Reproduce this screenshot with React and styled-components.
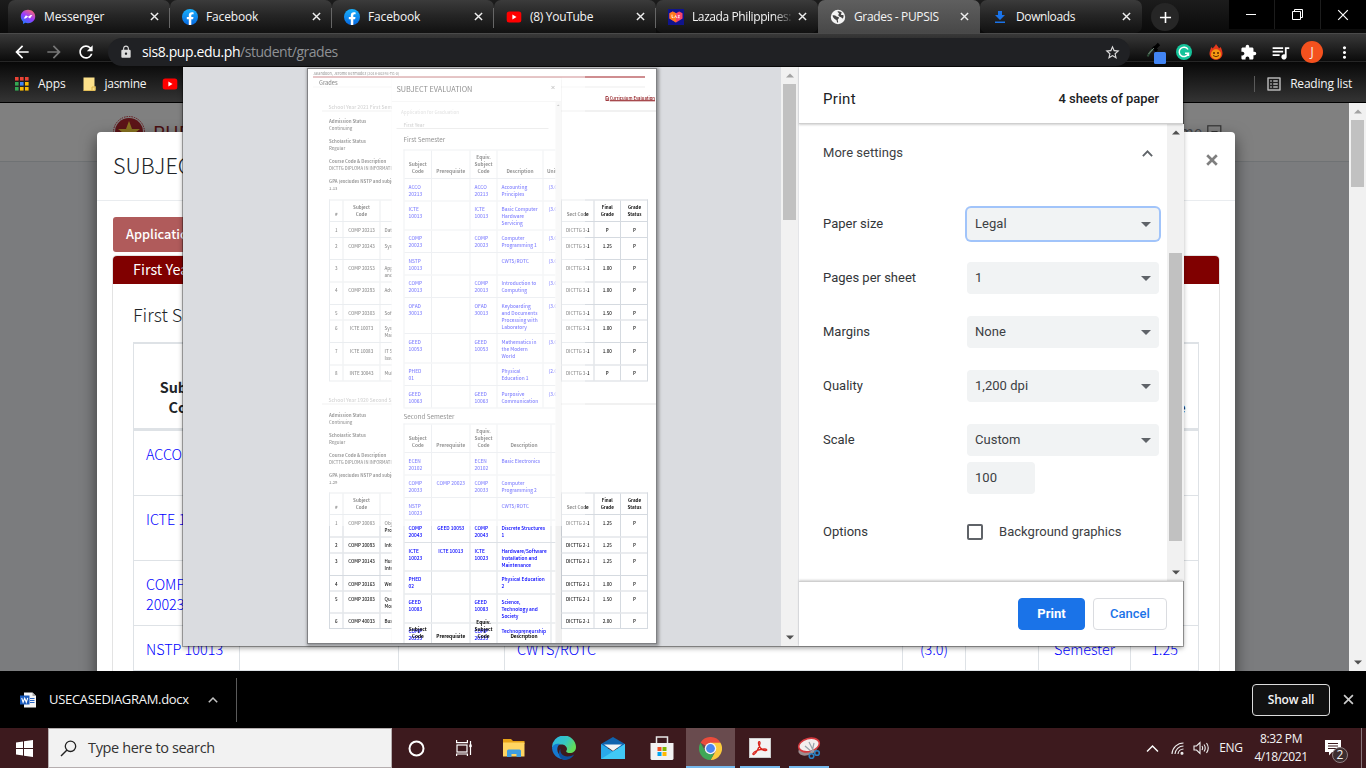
import React from "react";
import styled, { createGlobalStyle, css } from "styled-components";
import {
  MdArrowBack, MdArrowForward, MdRefresh, MdLock, MdStarBorder, MdExtension,
  MdQueueMusic, MdMoreVert, MdListAlt, MdAdd,
} from "react-icons/md";

const ui = `"Open Sans", "Noto Sans", sans-serif`;
const roboto = `Roboto, sans-serif`;
const source = `"Noto Sans CJK SC", "Noto Sans", sans-serif`;

const Global = createGlobalStyle`
  * { box-sizing: border-box; }
  html, body { margin: 0; padding: 0; overflow: hidden; }
  body { font-family: ${ui}; }
  svg { display: block; flex: none; }
`;

const Screen = styled.div`
  position: relative;
  width: 1366px;
  height: 768px;
  display: flex;
  flex-direction: column;
  overflow: hidden;
  background: #000;
`;

const Text = styled.span`
  font-family: ${(p) => p.$font || ui};
  font-size: ${(p) => p.$size || 12}px;
  font-weight: ${(p) => p.$weight || 400};
  letter-spacing: ${(p) => p.$ls || 0}px;
  color: ${(p) => p.$color || "#f4f4f4"};
  line-height: 1.3;
  white-space: nowrap;
`;

/* ---------- tab strip ---------- */
const TabStrip = styled.div`
  height: 33px;
  flex: none;
  display: flex;
  padding-left: 8px;
  background: linear-gradient(#1c1c1c, #0a0a0a);
`;
const TabBox = styled.div`
  width: 162px;
  height: 33px;
  display: flex;
  align-items: center;
  padding: 0 11px 0 12px;
  border-radius: ${(p) => (p.$active ? "7px 7px 0 0" : "7px")};
  background: ${(p) => p.$active ? "linear-gradient(#5f5f5f, #484848)" : "linear-gradient(#3b3b3b, #262626 45%, #111)"};
  ${(p) => p.$sep && css`
    border-radius: 7px 7px 0 0;
    background-image: linear-gradient(#666, #666), linear-gradient(#3b3b3b, #262626 45%, #111);
    background-size: 1px 20px, 100% 100%;
    background-position: right 0 top 8px, 0 0;
    background-repeat: no-repeat;
  `}
`;
const TabTitle = styled(Text)`
  flex: 1;
  margin-left: 8px;
  margin-right: 4px;
  padding-top: 1px;
  overflow: hidden;
  ${(p) => p.$fade && css`mask-image: linear-gradient(90deg, #000 80%, transparent);`}
`;
const NewTab = styled.div`
  width: 28px;
  height: 28px;
  margin: 3px 0 0 9px;
  border-radius: 14px;
  background: #262626;
  display: flex;
  align-items: center;
  justify-content: center;
`;
const WinControls = styled.div`
  display: flex;
  gap: 1px;
  margin-left: auto;
  height: 29px;
  background: #1c1c1c;
`;
const WinButton = styled.div`
  width: 45px;
  display: flex;
  align-items: center;
  justify-content: center;
  padding-right: 1px;
  background: #000;
`;

const X = ({ size = 9, color = "#eee", w = 1.6 }) => (
  <svg width={size} height={size} viewBox="0 0 10 10">
    <path d="M1 1L9 9M9 1L1 9" stroke={color} strokeWidth={w} fill="none" />
  </svg>
);

const Messenger = () => (
  <svg width="16" height="16" viewBox="0 0 16 16">
    <defs><linearGradient id="msg" x1="0.2" y1="1" x2="0.8" y2="0">
      <stop offset="0" stopColor="#1a7bff" /><stop offset=".5" stopColor="#9a3bff" /><stop offset="1" stopColor="#ff6a6a" />
    </linearGradient></defs>
    <path d="M8 .8C3.900.8.8 3.700.8 7.500c0 2 .8 3.700 2.200 4.900v2.600l2.300-1.200c.8.2 1.700.4 2.700.4 4.100 0 7.200-2.900 7.200-6.700S12.100.8 8 .8z" fill="url(#msg)" />
    <path d="M3.700 9.500l2.200-3.300 2.300 1.600 2.500-1.700h1.600L10 9.500 7.800 7.900 5.400 9.500z" fill="#fff" />
  </svg>
);
const Facebook = () => (
  <svg width="16" height="16" viewBox="0 0 16 16">
    <defs><linearGradient id="fb" x1="0" y1="0" x2="0" y2="1"><stop offset="0" stopColor="#1ab0fb" /><stop offset="1" stopColor="#0668e1" /></linearGradient></defs>
    <circle cx="8" cy="8" r="8" fill="url(#fb)" />
    <path d="M11.100 10.300l.4-2.300H9.300V6.500c0-.6.3-1.200 1.300-1.200h1V3.400S10.700 3.200 9.800 3.200C8 3.200 6.800 4.300 6.800 6.300V8h-2v2.300h2v5.600h2.500v-5.600z" fill="#fff" />
  </svg>
);
const YouTube = () => (
  <svg width="16" height="16" viewBox="0 0 16 16">
    <rect x=".7" y="2.600" width="14.600" height="11" rx="2.500" fill="#f00" />
    <path d="M6.400 5.600L10.500 8 6.400 10.400z" fill="#fff" />
  </svg>
);
const Lazada = () => (
  <svg width="16" height="16" viewBox="0 0 16 16">
    <rect width="16" height="16" fill="#10148c" />
    <path d="M8 13.500L1.500 9.500V4.200L4.800 2.500 8 4.300l3.200-1.800 3.300 1.700v5.300z" fill="#f8466a" />
    <path d="M8 13.500L1.500 9.500V4.200L4.800 2.500 8 4.300z" fill="#ff7a1a" />
    <path d="M4 5.600v3h1.500M6.600 8.800l1-2.200 1 2.200M9.800 6.600h1.700L9.900 8.700h1.800" stroke="#fff" strokeWidth=".8" fill="none" />
  </svg>
);
const DownloadIcon = () => (
  <svg width="16" height="16" viewBox="0 0 16 16">
    <path d="M6 2h4v4h3L8 11 3 6h3zM3 12.500h10V14H3z" fill="#1a73e8" />
  </svg>
);
const Globe = () => (
  <svg width="16" height="16" viewBox="0 0 16 16">
    <circle cx="8" cy="8" r="7.200" fill="#f4f4f4" />
    <path d="M2.500 6.500C4 6 5.500 6.500 6.500 7.500 7.500 8 9 7.800 9 8.800c0 1-1.200 1.200-1.200 2.200 0 1 .6 1.500.2 2.800-1-.3-1.300-1.600-1.500-2.800C5 10.500 3 9 2.500 6.500zM7.500 2.500c1.500-.6 3.500.2 4.500 1.500-.8.4-1.300.9-.9 1.800.6.5 1.600 0 2.400.4.2 1.300-.1 2.500-.7 3.300-1-.1-1.300-1.200-2.300-1.500-1-.4-2-.8-2.200-1.700-.1-.8.9-1.200.6-2C8.700 3.600 7.500 3.400 7.500 2.500z" fill="#444" />
  </svg>
);

const TABS = [
  { t: "Messenger", i: <Messenger />, sep: true, ls: -0.1 },
  { t: "Facebook", i: <Facebook />, sep: true, ls: -0.15 },
  { t: "Facebook", i: <Facebook />, sep: true, ls: -0.15 },
  { t: "(8) YouTube", i: <YouTube />, sep: true, ls: -0.3 },
  { t: "Lazada Philippines: O", i: <Lazada />, fade: true, ls: -0.4 },
  { t: "Grades - PUPSIS", i: <Globe />, active: true, ls: -0.35 },
  { t: "Downloads", i: <DownloadIcon />, ls: -0.4 },
];

/* ---------- toolbar ---------- */
const Chrome = styled.div`
  height: 70px;
  flex: none;
  background:
    linear-gradient(#4a4a4a, #4a4a4a) 0 0 / 100% 1px no-repeat,
    linear-gradient(#3a3a3a, #0b0b0b) 0 0 / 100% 28px no-repeat,
    linear-gradient(#262626, #262626) 0 28px / 100% 1px no-repeat,
    linear-gradient(#000, #000) 0 69px / 100% 1px no-repeat,
    linear-gradient(#080808, #343434) 0 29px / 100% 40px no-repeat;
`;
const Toolbar = styled.div`
  height: 35px;
  display: flex;
  align-items: center;
  padding: 3px 0 0 12px;
`;
const NavIcons = styled.div`
  width: 96px;
  display: flex;
  gap: 12px;
`;
const Omnibox = styled.div`
  width: 1022px;
  height: 28px;
  border-radius: 14px;
  background: #202124;
  display: flex;
  align-items: center;
  padding: 0 9px 0 11px;
  svg:last-child { margin-left: auto; }
`;
const Extensions = styled.div`
  flex: 1;
  display: flex;
  align-items: center;
  padding: 0 0 0 16px;
`;
const ExtensionSlot = styled.div`
  width: 32px;
  display: flex;
  justify-content: center;
`;
const EyedropperSlot = styled.div`
  width: 22px;
`;
const Avatar = styled.div`
  width: 22px;
  height: 22px;
  border-radius: 11px;
  background: #f4511e;
  display: flex;
  align-items: center;
  justify-content: center;
`;
const Bookmarks = styled.div`
  height: 35px;
  display: flex;
  align-items: center;
  padding: 0 14px 3px 15px;
`;
const Gap = styled.div`
  width: ${(p) => p.$w}px;
  flex: none;
`;
const Push = styled.div`flex: 1;`;
const Divider = styled.div`
  width: 1px;
  height: ${(p) => p.$h}px;
  background: #5a5a5a;
`;

const Eyedropper = () => (
  <svg width="20" height="23" viewBox="0 0 20 23">
    <path d="M1.500 15.500L4 11l4.500-4.500" stroke="#2d4a36" strokeWidth="2" fill="none" />
    <path d="M7 6l4 4M9.500 6.500L13 3" stroke="#000" strokeWidth="3.200" />
    <path d="M2.500 13L8 7" stroke="#8fa096" strokeWidth=".8" />
    <rect x="8" y="11" width="12" height="12" rx="1.500" fill="#4285f4" />
  </svg>
);
const Grammarly = () => (
  <svg width="16" height="16" viewBox="0 0 16 16">
    <circle cx="8" cy="8" r="8" fill="#15c39a" />
    <path d="M12 5.500A4.700 4.700 0 1 0 12.400 9.300H9M12.500 9v3" stroke="#fff" strokeWidth="1.500" fill="none" />
  </svg>
);
const Flame = () => (
  <svg width="14" height="16" viewBox="0 0 14 16">
    <path d="M7 0c1 2 2.500 2.500 3 4.500L11.500 3c1.200 2 2 4.500 2 6.500 0 3.500-2.800 6.300-6.500 6.300S.5 13 .5 9.500C.5 7.500 1.500 5 2.500 3l1.200 1.500C4.500 3 6.500 2 7 0z" fill="#e5391c" />
    <circle cx="7" cy="10.200" r="5" fill="#f59a12" />
    <circle cx="5" cy="9" r="1" fill="#5a2200" /><circle cx="9" cy="9" r="1" fill="#5a2200" />
    <path d="M4 11.500q3 2.500 6 0" stroke="#5a2200" strokeWidth=".9" fill="none" />
  </svg>
);
const AppsGrid = () => {
  const c = ["#ea4335", "#ea4335", "#ea4335", "#34a853", "#4285f4", "#fbbc05", "#34a853", "#fbbc05", "#fbbc05"];
  return (
    <svg width="14" height="14" viewBox="0 0 14 14">
      {c.map((f, i) => <rect key={i} x={(i % 3) * 5} y={Math.floor(i / 3) * 5} width="3.600" height="3.600" fill={f} />)}
    </svg>
  );
};
const Note = () => (
  <svg width="13" height="14" viewBox="0 0 13 14">
    <path d="M.5.5h11v9h1v4H.5z" fill="#fce18b" /><path d="M9 13.500V10h3.500" stroke="#dcb64c" fill="none" /><path d="M12 9.500v4H.5" stroke="#e2bd57" fill="none" />
  </svg>
);

/* ---------- page behind ---------- */
const Viewport = styled.div`
  position: relative;
  height: 568px;
  flex: none;
  display: flex;
  overflow: hidden;
  background: #7b7c7e;
`;
const PageArea = styled.div`
  flex: 1;
  display: flex;
  flex-direction: column;
`;
const SiteHeader = styled.div`
  height: 59px;
  background: #808080;
  border-bottom: 1px solid #6f7274;
  display: flex;
  align-items: center;
  padding: 0 127px 0 113px;
`;
const ScrollTrack = styled.div`
  width: 17px;
  flex: none;
  display: flex;
  flex-direction: column;
  align-items: center;
  justify-content: space-between;
  padding: 6px 0 6px;
  background: ${(p) => `linear-gradient(#c1c1c1, #c1c1c1) center ${p.$top}px / 13px ${p.$len}px no-repeat, #f1f1f1`};
`;
const Arrow = ({ up, color = "#505050" }) => (
  <svg width="8" height="5" viewBox="0 0 8 5">
    <path d={up ? "M0 4.500L4 .5 8 4.500z" : "M0 .5L4 4.500 8 .5z"} fill={color} />
  </svg>
);
const EvalModal = styled.div`
  position: absolute;
  left: 97px;
  top: 29px;
  width: 1138px;
  height: 620px;
  background: #fff;
  border-radius: 4px;
  box-shadow: 0 6px 16px rgba(0, 0, 0, 0.55);
  color: #212529;
`;
const EvalHead = styled.div`
  height: 69px;
  border-bottom: 1px solid #e9ecef;
  display: flex;
  align-items: center;
  justify-content: space-between;
  padding: 0 17px 2px 16px;
  svg { margin-top: -10px; }
`;
const EvalBody = styled.div`
  padding: 16px 16px 0;
`;
const GraduationButton = styled.div`
  height: 35px;
  width: 200px;
  padding: 0 13px;
  border-radius: 3px;
  background: #b05b5b;
  display: flex;
  align-items: center;
`;
const YearCard = styled.div`
  margin-top: 4px;
  height: 430px;
  box-shadow: 0 0 0 1px #e3e3e3;
  border-radius: 4px 4px 0 0;
`;
const YearHead = styled.div`
  height: 28px;
  padding: 0 20px 2px;
  border-radius: 4px 4px 0 0;
  background: #800000;
  display: flex;
  align-items: center;
`;
const Semester = styled.div`
  height: 58px;
  padding: 19px 20px 0;
`;
const COLS = "106px 159px 106px 398px 63px 73px 92px 68px";
const SubjTable = styled.div`
  margin-left: 20px;
  width: 1066px;
  border-left: 1px solid #dee2e6;
  border-top: 2px solid #dee2e6;
`;
const SubjRow = styled.div`
  display: grid;
  grid-template-columns: ${COLS};
  height: ${(p) => p.$h}px;
  border-bottom: ${(p) => (p.$head ? 3 : 1)}px solid #dee2e6;
`;
const SubjCell = styled.div`
  padding: 13px 12px 0;
  font: 300 14.4px/20px ${source};
  color: #0000ff;
  white-space: pre-line;
  border-right: 1px solid #dee2e6;
  text-align: ${(p) => (p.$c ? "center" : "left")};
  ${(p) => p.$head && css`
    font-weight: 700;
    font-size: 14.4px;
    color: #212529;
    display: flex;
    align-items: flex-end;
    justify-content: center;
    text-align: center;
    padding-bottom: 13px;
  `}
`;
const HEADS = ["Subject Code", "Prerequisite", "Equiv. Subject Code", "Description", "Units", "", "Taken", "Grade"];
const ROWS = [
  [65, ["ACCO 20213", "", "", "Accounting Principles", "(3.0)", "", "", ""]],
  [65, ["ICTE 10013", "", "", "Basic Computer Hardware Servicing", "(3.0)", "", "", ""]],
  [65, ["COMP\n20023", "", "", "Computer Programming 1", "(3.0)", "", "", ""]],
  [45, ["NSTP 10013", "", "", "CWTS/ROTC", "(3.0)", "", "Semester", "1.25"]],
];

const Seal = () => (
  <svg width="32" height="32" viewBox="0 0 32 32">
    <circle cx="16" cy="16" r="15.500" fill="none" stroke="#65181c" strokeDasharray="1.500 1" />
    <circle cx="16" cy="16" r="14" fill="#5c1418" />
    <path d="M16 5l3 8h8l-6.500 5 2.500 8-7-5-7 5 2.500-8L5 13h8z" fill="#8a7420" />
  </svg>
);

/* ---------- print dialog ---------- */
const Dialog = styled.div`
  position: absolute;
  left: 183px;
  top: 67px;
  width: 1000px;
  height: 579px;
  display: flex;
  background: #fff;
  box-shadow: 0 0 0 1px rgba(0, 0, 0, 0.3), 0 2px 5px rgba(0, 0, 0, 0.4);
`;
const Preview = styled.div`
  width: 598px;
  background: #dadce0;
  padding: 2px 0 0 125px;
`;
const Panel = styled.div`
  width: 385px;
  display: flex;
  flex-direction: column;
  border-left: 1px solid #e4e5e8;
`;
const PanelHead = styled.div`
  height: 57px;
  display: flex;
  align-items: center;
  justify-content: space-between;
  padding: 9px 24px 0;
  border-bottom: 1px solid #cfcfcf;
  box-shadow: 0 1px 2px rgba(0, 0, 0, 0.18);
  position: relative;
`;
const PanelMid = styled.div`
  height: 457px;
  display: flex;
`;
const Settings = styled.div`
  flex: 1;
  padding: 0 8px 0 24px;
`;
const More = styled.div`
  height: 59px;
  margin-bottom: 14px;
  padding: 0 6px 0 0;
  display: flex;
  align-items: center;
  justify-content: space-between;
`;
const SettingRow = styled.div`
  height: 54px;
  display: flex;
  align-items: center;
`;
const SettingLabel = styled(Text).attrs({ $font: roboto, $size: 13, $color: "#333639" })`
  width: 144px;
`;
const Select = styled.div`
  width: 192px;
  height: 32px;
  border-radius: 4px;
  background: #f1f3f4;
  display: flex;
  align-items: center;
  justify-content: space-between;
  padding: 0 8px;
  ${(p) => p.$focus && css`box-shadow: 0 0 0 2px #a1c4fa;`}
`;
const ScaleInput = styled(Select)`
  width: 68px;
  margin: -5px 0 0 144px;
`;
const OptionRow = styled(SettingRow)`
  margin-top: 11px;
`;
const Checkbox = styled.div`
  width: 16px;
  height: 16px;
  border: 2px solid #5f6368;
  border-radius: 2px;
  margin-right: 16px;
`;
const PanelFoot = styled.div`
  flex: 1;
  display: flex;
  justify-content: flex-end;
  gap: 8px;
  padding: 16px 16px 0;
  border-top: 1px solid #cfcfcf;
  box-shadow: 0 -1px 2px rgba(0, 0, 0, 0.18);
  position: relative;
`;
const Button = styled.div`
  height: 32px;
  width: ${(p) => p.$w}px;
  border-radius: 4px;
  display: flex;
  align-items: center;
  justify-content: center;
  background: ${(p) => (p.$primary ? "#1a73e8" : "#fff")};
  border: 1px solid ${(p) => (p.$primary ? "#1a73e8" : "#dadce0")};
`;

/* ---------- previewed sheet ---------- */
/* laid out at four times its size and scaled down, so the tiny glyphs keep their true proportions */
const Sheet = styled.div`
  position: relative;
  width: 348px;
  height: 574px;
  zoom: 4;
  transform: scale(0.25);
  transform-origin: 0 0;
  background: #fff;
  overflow: hidden;
`;
const SheetFrame = styled.div`
  width: 348px;
  height: 574px;
  box-shadow: 0 0 0 1px #808184, 1px 1px 3px 2px rgba(0, 0, 0, 0.35);
`;
const Tiny = styled.div`
  height: ${(p) => p.$h || 7}px;
  line-height: ${(p) => p.$h || 7}px;
  font-family: ${source};
  font-size: ${(p) => p.$size || 4.4}px;
  font-weight: ${(p) => p.$weight || 500};
  color: ${(p) => p.$color || "#333"};
  white-space: nowrap;
  padding-left: ${(p) => p.$x || 0}px;
`;
const DocName = styled(Tiny)`
  border-bottom: 1px solid #a01c22;
  margin: 0 11px 0 5px;
`;
const GradesTitle = styled(Tiny)`
  margin: 0 11px 0 5px;
  border-bottom: 1px solid #eee;
`;
const Curriculum = styled.div`
  height: 15px;
  display: flex;
  align-items: center;
  justify-content: flex-end;
  gap: 0.5px;
  padding: 7px 1px 0 0;
`;
const MaroonLink = styled(Tiny)`
  color: #8b0f14;
  border-bottom: 1px solid #8b0f14;
`;
const YearLine = styled(Tiny)`
  margin-left: 14px;
  padding-left: 6.5px;
  border-bottom: 1px solid #e4e4e4;
`;
const Facts = styled.div`
  padding-left: 21px;
  padding-top: ${(p) => p.$top}px;
  height: ${(p) => p.$h}px;
`;
const Fact = styled.div`
  height: 20px;
`;
const GCOLS = "13.5px 37px 181.5px 32.5px 26.5px 27px";
const GradeTable = styled.div`
  margin-left: 21px;
  width: 319px;
  border: solid #d5dae0;
  border-width: 1px 1px 0 1px;
`;
const GradeRow = styled.div`
  display: grid;
  grid-template-columns: ${GCOLS};
  height: ${(p) => p.$h}px;
  border-bottom: 1px solid #d5dae0;
`;
const GradeCell = styled.div`
  font: ${(p) => (p.$b ? 700 : 500)} 4.500px/7px ${source};
  color: ${(p) => (p.$b ? "#111" : "#222")};
  padding: ${(p) => (p.$head ? "0 0 3.500px" : "4px 0 0")};
  padding-left: ${(p) => (p.$left ? 4 : 0)}px;
  text-align: ${(p) => (p.$left ? "left" : "center")};
  border-right: 1px solid #d5dae0;
  white-space: pre;
  display: flex;
  align-items: ${(p) => (p.$head ? "flex-end" : "flex-start")};
  justify-content: ${(p) => (p.$left ? "flex-start" : "center")};
  &:last-child { border-right: 0; }
`;
const SecondTerm = styled.div`
  padding-top: 13.5px;
`;
const PrintModal = styled.div`
  position: absolute;
  left: 83.500px;
  top: 9px;
  width: 169.500px;
  height: 565px;
  background: #fff;
  box-shadow: 0 0 1px 1px rgba(0, 0, 0, 0.07);
  overflow: hidden;
`;
const PmHead = styled.div`
  height: 24px;
  border-bottom: 1px solid #eee;
  display: flex;
  align-items: center;
  justify-content: space-between;
  padding: 0 6px 1px 5px;
  svg { margin-top: -3px; }
`;
const PmBody = styled.div`
  display: flex;
`;
const PmContent = styled.div`
  width: 164px;
  overflow: hidden;
`;
const PmScroll = styled.div`
  width: 5.5px;
  height: 541px;
  background: #f0f0f0;
  display: flex;
  justify-content: center;
  padding-top: 2px;
`;
const PmYear = styled(Tiny)`
  margin: 0 7px 0 5px;
  border-bottom: 1px solid #ddd;
`;
const PmTable = styled.div`
  margin-left: 12px;
  width: 190px;
  border: solid #dde1e6;
  border-width: 1px 0 0 1px;
`;
const PmRow = styled.div`
  display: grid;
  grid-template-columns: 27.500px 38.500px 27px ${(p) => p.$last || 46}px 40px;
  height: ${(p) => p.$h}px;
  border-bottom: 1px solid #dde1e6;
`;
const PmCell = styled.div`
  font: ${(p) => (p.$head ? 700 : 500)} 4.800px/7px ${source};
  color: ${(p) => (p.$head ? "#222" : "#0000ff")};
  white-space: pre;
  border-right: 1px solid #dde1e6;
  display: flex;
  align-items: ${(p) => (p.$head ? "flex-end" : "flex-start")};
  justify-content: ${(p) => (p.$c || p.$head ? "center" : "flex-start")};
  text-align: ${(p) => (p.$c || p.$head ? "center" : "left")};
  padding: ${(p) => (p.$head ? "0 0 3.500px" : "4px 0 0 4px")};
  ${(p) => p.$c && "padding-left: 0;"}
  ${(p) => p.$units && "justify-content: flex-start; padding-left: 3.500px;"}
`;
const RepeatedHead = styled.div`
  position: absolute;
  left: 96px;
  bottom: 0;
  display: grid;
  grid-template-columns: 27.500px 38.500px 27px 54px;
  height: 26px;
`;
const RepeatedCell = styled(PmCell)`
  border: 0;
  color: #000;
`;
const Fade = styled.div`
  position: absolute;
  left: 0;
  top: 0;
  width: 277px;
  height: 457px;
  background: rgba(255, 255, 255, 0.5);
`;

const G1 = [
  [16, "1", "COMP 20213", "Data", "DICTTG 3-1", "P"],
  [22, "2", "COMP 20243", "Syst", "DICTTG 3-1", "1.25"],
  [22.5, "3", "COMP 20253", "Appl\nand", "DICTTG 3-1", "1.00"],
  [22.5, "4", "COMP 20293", "Adva", "DICTTG 3-1", "1.00"],
  [15.5, "5", "COMP 20303", "Soft", "DICTTG 3-1", "1.50"],
  [22.5, "6", "ICTE 10073", "Syst\nMain", "DICTTG 3-1", "1.00"],
  [22.5, "7", "ICTE 10083", "IT So\nIssu", "DICTTG 3-1", "1.00"],
  [16, "8", "INTE 30043", "Mult", "DICTTG 3-1", "P"],
];
const G2 = [
  [22.5, "1", "COMP 20083", "Obje\nProg", "DICTTG 2-1", "1.25"],
  [16, "2", "COMP 20093", "Info", "DICTTG 2-1", "1.25"],
  [22.5, "3", "COMP 20143", "Hum\nInte", "DICTTG 2-1", "1.25"],
  [15.5, "4", "COMP 20163", "Web", "DICTTG 2-1", "1.00"],
  [22, "5", "COMP 20203", "Qua\nMod", "DICTTG 2-1", "1.50"],
  [15.5, "6", "COMP 40033", "Busi", "DICTTG 2-1", "2.00"],
];
const E1 = [
  [22.5, "ACCO\n20213", "", "ACCO\n20213", "Accounting\nPrinciples", "(3.0)"],
  [29, "ICTE\n10013", "", "ICTE\n10013", "Basic Computer\nHardware\nServicing", "(3.0)"],
  [22.5, "COMP\n20023", "", "COMP\n20023", "Computer\nProgramming 1", "(3.0)"],
  [22.5, "NSTP\n10013", "", "", "CWTS/ROTC", "(3.0)"],
  [22.5, "COMP\n20013", "", "COMP\n20013", "Introduction to\nComputing", "(3.0)"],
  [36, "OFAD\n30013", "", "OFAD\n30013", "Keyboarding\nand Documents\nProcessing with\nLaboratory", "(3.0)"],
  [29.5, "GEED\n10053", "", "GEED\n10053", "Mathematics in\nthe Modern\nWorld", "(3.0)"],
  [22.5, "PHED\n01", "", "", "Physical\nEducation 1", "(2.0)"],
  [22.5, "GEED\n10063", "", "GEED\n10063", "Purposive\nCommunication", "(3.0)"],
];
const E2 = [
  [22.5, "ECEN\n20102", "", "ECEN\n20102", "Basic Electronics", ""],
  [22.5, "COMP\n20033", "COMP 20023", "COMP\n20033", "Computer\nProgramming 2", ""],
  [22.5, "NSTP\n10023", "", "", "CWTS/ROTC", ""],
  [22.5, "COMP\n20043", "GEED 10053", "COMP\n20043", "Discrete Structures\n1", ""],
  [28.5, "ICTE\n10023", "ICTE 10013", "ICTE\n10023", "Hardware/Software\nInstallation and\nMaintenance", ""],
  [23, "PHED\n02", "", "", "Physical Education\n2", ""],
  [29, "GEED\n10083", "", "GEED\n10083", "Science,\nTechnology and\nSociety", ""],
  [29, "COMP\n20233", "", "COMP\n20233", "Technopreneurship", ""],
];

const FactList = ({ top, h, gpa }) => (
  <Facts $top={top} $h={h}>
    <Fact><Tiny $weight={700}>Admission Status</Tiny><Tiny>Continuing</Tiny></Fact>
    <Fact><Tiny $weight={700}>Scholastic Status</Tiny><Tiny>Regular</Tiny></Fact>
    <Fact><Tiny $weight={700}>Course Code &amp; Description</Tiny><Tiny $size={4.2}>DICTTG DIPLOMA IN INFORMATION</Tiny></Fact>
    <Fact><Tiny $weight={700}>GPA (excludes NSTP and subjects</Tiny><Tiny $size={4.2}>{gpa}</Tiny></Fact>
  </Facts>
);
const Grades = ({ rows }) => (
  <GradeTable>
    <GradeRow $h={21.5}>
      {["#", "Subject\nCode", "", "Sect Code", "Final\nGrade", "Grade\nStatus"].map((t, i) => <GradeCell key={i} $head $b>{t}</GradeCell>)}
    </GradeRow>
    {rows.map((r) => (
      <GradeRow key={r[1]} $h={r[0]}>
        <GradeCell>{r[1]}</GradeCell><GradeCell>{r[2]}</GradeCell><GradeCell $left>{r[3]}</GradeCell>
        <GradeCell>{r[4]}</GradeCell><GradeCell>{r[5]}</GradeCell><GradeCell>P</GradeCell>
      </GradeRow>
    ))}
  </GradeTable>
);
const EHEAD = ["Subject\nCode", "Prerequisite", "Equiv.\nSubject\nCode", "Description"];
const Evaluation = ({ rows, last, units }) => (
  <PmTable>
    <PmRow $h={28.5} $last={last}>
      {[...EHEAD, units ? "Units" : ""].map((t, i) => <PmCell key={i} $head $c={i < 4} $units={i === 4}>{t}</PmCell>)}
    </PmRow>
    {rows.map((r, k) => (
      <PmRow key={k} $h={r[0]} $last={last}>
        <PmCell>{r[1]}</PmCell><PmCell $c>{r[2]}</PmCell><PmCell>{r[3]}</PmCell><PmCell>{r[4]}</PmCell><PmCell>{" " + r[5]}</PmCell>
      </PmRow>
    ))}
  </PmTable>
);

/* ---------- shelf and taskbar ---------- */
const Shelf = styled.div`
  height: 57px;
  flex: none;
  background: #000;
  display: flex;
  align-items: center;
  padding: 0 12px 0 20px;
`;
const ShowAll = styled.div`
  width: 78px;
  height: 32px;
  border: 1px solid #dcdcdc;
  border-radius: 4px;
  background: #111;
  display: flex;
  align-items: center;
  justify-content: center;
`;
const Taskbar = styled.div`
  height: 40px;
  flex: none;
  background: #3d1a1e;
  display: flex;
`;
const TaskItem = styled.div`
  width: ${(p) => p.$w || 49}px;
  height: 40px;
  display: flex;
  align-items: center;
  justify-content: center;
  ${(p) => p.$open && css`background: linear-gradient(#76b9ed, #76b9ed) center bottom / 40px 2px no-repeat;`}
  ${(p) => p.$active && css`background: linear-gradient(#76b9ed, #76b9ed) center bottom / 100% 2px no-repeat, #694b4e;`}
`;
const SearchBox = styled.div`
  width: 344px;
  height: 40px;
  background: #f2f2f2;
  border: 1px solid #b5aeaf;
  display: flex;
  align-items: center;
  padding: 1px 0 0 11px;
`;
const Clock = styled.div`
  width: 64px;
  display: flex;
  flex-direction: column;
  align-items: center;
  justify-content: center;
  gap: 2px;
`;
const Notice = styled.div`
  position: relative;
  width: 24px;
`;
const Count = styled.div`
  position: absolute;
  left: 7px;
  top: 7px;
  width: 16px;
  height: 16px;
  border: 1px solid #8f8083;
  border-radius: 8px;
  background: #3c2d2f;
  display: flex;
  align-items: center;
  justify-content: center;
`;
const ShowDesktop = styled.div`
  width: 5px;
  margin-left: 12px;
  border-left: 1px solid #87757a;
`;

const Chevron = ({ w = 10, color = "#bbb", sw = 1.5 }) => (
  <svg width={w} height={w} viewBox="0 0 10 10"><path d="M.8 7.300L5 3l4.200 4.300" stroke={color} strokeWidth={sw} fill="none" /></svg>
);
const WordIcon = () => (
  <svg width="17" height="16" viewBox="0 0 17 16">
    <path d="M4 .5h8.500L16 4v11.500H4z" fill="#f5f5f5" /><path d="M12.500.5V4H16z" fill="#a9a9a9" />
    <path d="M10 6.500h4.500M10 8.500h4.500M10 10.500h4.500" stroke="#2b66c4" strokeWidth="1" />
    <rect x="0" y="3.500" width="9.500" height="9" fill="#185abd" />
    <path d="M1.700 5.800l1.400 4.500 1.600-4 1.600 4 1.400-4.500" stroke="#fff" strokeWidth="1.100" fill="none" />
  </svg>
);
const WindowsIcon = () => (
  <svg width="17" height="17" viewBox="0 0 17 17"><path d="M0 2.500l7-1V8H0zM8 1.300L17 0v8H8zM0 9h7v6.600l-7-1zM8 9h9v8l-9-1.300z" fill="#fff" /></svg>
);
const SearchIcon = () => (
  <svg width="17" height="17" viewBox="0 0 17 17"><circle cx="10.500" cy="6.300" r="5.200" fill="none" stroke="#222" strokeWidth="1.300" /><path d="M7 10L1 16" stroke="#222" strokeWidth="1.400" /></svg>
);
const TaskView = () => (
  <svg width="16" height="16" viewBox="0 0 16 16" fill="none" stroke="#fff" strokeWidth="1.200">
    <rect x="1" y="5" width="10" height="7" /><path d="M.600 0v2.600h10.800V0M.600 16v-2h10.800v2M14.500 1v14" /><rect x="13.300" y="4.500" width="2.400" height="2.600" fill="#fff" stroke="none" />
  </svg>
);
const Folder = () => (
  <svg width="22" height="18" viewBox="0 0 22 18">
    <path d="M0 0h8l2 2h11.500v3H0z" fill="#e8a317" /><path d="M0 3.500h21.500V17.500H0z" fill="#ffd562" />
    <path d="M4 18v-6a1.500 1.500 0 0 1 1.500-1.500h11A1.500 1.500 0 0 1 18 12v6h-4.500v-3h-5v3z" fill="#3f9ee0" />
  </svg>
);
const Edge = () => (
  <svg width="24" height="24" viewBox="0 0 24 24">
    <defs><linearGradient id="eg" x1="0" y1="0" x2="1" y2=".5"><stop offset="0" stopColor="#2ab4e8" /><stop offset=".6" stopColor="#36c7c0" /><stop offset="1" stopColor="#62dd58" /></linearGradient></defs>
    <path d="M0 12a12 12 0 0 1 24-1c0 4-3 6-6 6-3 0-4.500-1.300-3.500-2.600C16 12.500 14 9 10.500 8.500 5 8 0 11 0 12z" fill="url(#eg)" />
    <path d="M0 12C.5 9 4 7 8 8c-3 2-3.500 6-1.500 9.500 2 3.700 6 5.300 10 5A12 12 0 0 1 0 12z" fill="#1579cf" />
    <path d="M8.500 12.500c-1 4 2 8 7 8 2.500 0 5-.8 6.500-2-2 4-6 5.500-10 5.500-5-1.500-6.500-7-3.500-11.500z" fill="#0d4f9e" />
  </svg>
);
const Mail = () => (
  <svg width="24" height="22" viewBox="0 0 24 22">
    <path d="M0 7L12 0l12 7v4H0z" fill="#0f63ae" />
    <path d="M0 7l12 7.500L24 7v15H0z" fill="#29a9ea" /><path d="M0 22L24 7v15z" fill="#41c8f5" /><path d="M3 7.500h18L12 14z" fill="#f2f4f6" />
  </svg>
);
const Store = () => (
  <svg width="24" height="24" viewBox="0 0 24 24">
    <path d="M6.500 8V1h11v7" fill="none" stroke="#e6e6e6" strokeWidth="1.500" /><path d="M.5 7h23v16l-1 1h-21l-1-1z" fill="#f2f2f2" />
    <rect x="7.500" y="11" width="4" height="4" fill="#f25022" /><rect x="12.500" y="11" width="4" height="4" fill="#7fba00" />
    <rect x="7.500" y="16" width="4" height="4" fill="#00a4ef" /><rect x="12.500" y="16" width="4" height="4" fill="#ffb900" />
  </svg>
);
const ChromeLogo = () => (
  <svg width="23" height="23" viewBox="0 0 24 24">
    <path d="M12 12L1.600 6A12 12 0 0 1 22.400 6z" fill="#ea4c3c" /><path d="M12 6h10.400A12 12 0 0 1 12 24l5.200-9z" fill="#fbcb3c" />
    <path d="M1.600 6L6.800 15 12 17.500h3.700L12 24A12 12 0 0 1 1.600 6z" fill="#3fa757" /><circle cx="12" cy="12" r="6" fill="#f3f3f3" /><circle cx="12" cy="12" r="4.600" fill="#4b86f0" />
  </svg>
);
const Acrobat = () => (
  <svg width="22" height="20" viewBox="0 0 22 20">
    <rect x=".5" y=".5" width="21" height="19" fill="#f3f3f3" stroke="#ccc" />
    <path d="M4 15.500c1-2 6-4.500 11.500-4.500 2.500 0 3 1.500 1 1.700C13 13 9 7.500 9.500 4.500c.2-1.500 1.800-1 1.500.8C10.500 9 7 15.500 5 16.500c-.8.4-1.300-.3-1-1z" fill="none" stroke="#d9251c" strokeWidth="1.300" />
  </svg>
);
const Snip = () => (
  <svg width="24" height="23" viewBox="0 0 24 23">
    <ellipse cx="11" cy="12" rx="10" ry="6" fill="#9c8d90" transform="rotate(-22 11 12)" />
    <ellipse cx="12" cy="8" rx="10.500" ry="6.500" fill="#f3eeee" stroke="#d63a3f" strokeWidth="1.600" transform="rotate(-15 12 8)" />
    <path d="M12 5l5 10M17 6l-2 9M8 9l7 6" stroke="#99a2aa" strokeWidth="1.200" />
    <circle cx="14.500" cy="19" r="2.300" fill="none" stroke="#2b82c3" strokeWidth="1.600" /><circle cx="20" cy="16" r="2.300" fill="none" stroke="#2b82c3" strokeWidth="1.600" />
  </svg>
);
const Wifi = () => (
  <svg width="13" height="13" viewBox="0 0 13 13" fill="none" stroke="#eee" strokeWidth="1.100">
    <path d="M1 12A11.500 11.500 0 0 1 12.500 1M4 12a8.500 8.500 0 0 1 8.500-8M7 12a5.500 5.500 0 0 1 5.500-5" /><circle cx="11" cy="11.300" r="1" fill="#eee" />
  </svg>
);
const Sound = () => (
  <svg width="17" height="14" viewBox="0 0 17 14" fill="none" stroke="#eee" strokeWidth="1.100">
    <path d="M1 5h2.500L7 1.500v11L3.500 9H1zM9 5q1.300 2 0 4M11 3.500q2.500 3.500 0 7M13.500 2q3.500 5 0 10" />
  </svg>
);
const Bubble = () => (
  <svg width="16" height="16" viewBox="0 0 16 16"><path d="M0 0h16v12H7l-3 3.500V12H0z" fill="#fff" /><path d="M3 3.500h10M3 6h10M3 8.500h10" stroke="#3d1a1e" /></svg>
);

const SELECTS = [["Paper size", "Legal"], ["Pages per sheet", "1"], ["Margins", "None"], ["Quality", "1,200 dpi"], ["Scale", "Custom"]];
const DropArrow = () => <svg width="10" height="5" viewBox="0 0 10 5"><path d="M0 0h10L5 5z" fill="#5f6368" /></svg>;
const Val = (p) => <Text $font={roboto} $size={13} $color="#3c4043" $ls={0.03} {...p} />;

function PrintDialog() {
  return (
    <Dialog>
      <Preview>
        <SheetFrame>
          <Sheet>
            <DocName $h={8.5} $size={3.7} $color="#444">Jalandoon, Jerome Bermudez (2018-00293-TG-0)</DocName>
            <GradesTitle $h={10} $size={5.6} $x={6} $color="#111">Grades</GradesTitle>
            <Curriculum>
              <svg width="4" height="5" viewBox="0 0 4 5"><path d="M.5.5h2l1 1v3h-3zM1 3h2" fill="none" stroke="#8b0f14" strokeWidth=".8" /></svg>
              <MaroonLink $h={5.5} $size={4.25}>Curriculum Evaluation</MaroonLink>
            </Curriculum>
            <YearLine $h={9} $size={5} $color="#aaa">School Year 2021 First Semester</YearLine>
            <FactList top={6.5} h={88} gpa="1.13" />
            <Grades rows={G1} />
            <SecondTerm>
              <YearLine $h={9.5} $size={5} $color="#aaa">School Year 1920 Second Semester</YearLine>
              <FactList top={7} h={88} gpa="1.29" />
              <Grades rows={G2} />
            </SecondTerm>
            <PrintModal>
              <PmHead><Tiny $h={12} $size={7.3} $weight={400} $color="#111">SUBJECT EVALUATION</Tiny><X size={4} color="#777" w={2} /></PmHead>
              <PmBody>
                <PmContent>
                  <Tiny $h={19} $size={4.6} $x={9.5} $color="#ccc">Application for Graduation</Tiny>
                  <PmYear $h={8} $size={4.8} $x={7} $color="#aaa">First Year</PmYear>
                  <Tiny $h={20.5} $size={6.3} $x={12} $weight={400} $color="#222">First Semester</Tiny>
                  <Evaluation rows={E1} units />
                  <Tiny $h={15} $size={6.3} $x={12} $weight={400} $color="#222">Second Semester</Tiny>
                  <Evaluation rows={E2} last={54} />
                </PmContent>
                <PmScroll><svg width="3" height="2" viewBox="0 0 3 2"><path d="M0 2L1.500.5 3 2z" fill="#999" /></svg></PmScroll>
              </PmBody>
            </PrintModal>
            <RepeatedHead>{EHEAD.map((t) => <RepeatedCell key={t} $head $c>{t}</RepeatedCell>)}</RepeatedHead>
            <Fade />
          </Sheet>
        </SheetFrame>
      </Preview>
      <ScrollTrack $top={17} $len={136}><Arrow up color="#a3a3a3" /><Arrow /></ScrollTrack>
      <Panel>
        <PanelHead>
          <Text $font={roboto} $size={15} $color="#202124" $ls={0.3}>Print</Text>
          <Text $font={roboto} $size={13} $color="#202124" $weight={500} $ls={-0.03}>4 sheets of paper</Text>
        </PanelHead>
        <PanelMid>
          <Settings>
            <More><Val>More settings</Val><Chevron w={11} color="#5f6368" sw={1.7} /></More>
            {SELECTS.map(([l, v], i) => (
              <SettingRow key={l}>
                <SettingLabel>{l}</SettingLabel>
                <Select $focus={i === 0}><Val>{v}</Val><DropArrow /></Select>
              </SettingRow>
            ))}
            <ScaleInput><Val>100</Val></ScaleInput>
            <OptionRow><SettingLabel>Options</SettingLabel><Checkbox /><Val>Background graphics</Val></OptionRow>
          </Settings>
          <ScrollTrack $top={129} $len={288}><Arrow up /><Arrow /></ScrollTrack>
        </PanelMid>
        <PanelFoot>
          <Button $primary $w={67}><Text $font={roboto} $size={13} $weight={700} $color="#fff">Print</Text></Button>
          <Button $w={74}><Text $font={roboto} $size={13} $weight={500} $color="#1a73e8">Cancel</Text></Button>
        </PanelFoot>
      </Panel>
    </Dialog>
  );
}

export default function App() {
  return (
    <Screen>
      <Global />
      <TabStrip>
        {TABS.map((t, i) => (
          <TabBox key={i} $active={t.active} $sep={t.sep}>
            {t.i}
            <TabTitle $fade={t.fade} $ls={t.ls}>{t.t}</TabTitle>
            <X />
          </TabBox>
        ))}
        <NewTab><MdAdd size={19} color="#fff" /></NewTab>
        <WinControls>
          <WinButton><svg width="10" height="2"><rect width="10" height="1" fill="#fff" /></svg></WinButton>
          <WinButton><svg width="11" height="11" viewBox="0 0 11 11" fill="none" stroke="#fff"><path d="M.5 2.500h8v8h-8zM2.500 2.500v-2h8v8h-2" /></svg></WinButton>
          <WinButton><X size={12} w={1} color="#fff" /></WinButton>
        </WinControls>
      </TabStrip>
      <Chrome>
        <Toolbar>
          <NavIcons><MdArrowBack size={20} color="#fff" /><MdArrowForward size={20} color="#777" /><MdRefresh size={20} color="#fff" /></NavIcons>
          <Omnibox>
            <MdLock size={14} color="#dcdcdc" /><Gap $w={9} />
            <Text $size={14} $ls={-0.38} $color="#fff">sis8.pup.edu.ph</Text><Text $size={14} $ls={-0.47} $color="#8f9195">/student/grades</Text>
            <MdStarBorder size={17} color="#ddd" />
          </Omnibox>
          <Extensions>
            <EyedropperSlot><Eyedropper /></EyedropperSlot>
            <ExtensionSlot><Grammarly /></ExtensionSlot>
            <ExtensionSlot><Flame /></ExtensionSlot>
            <ExtensionSlot><MdExtension size={17} color="#fff" /></ExtensionSlot>
            <ExtensionSlot><MdQueueMusic size={21} color="#fff" /></ExtensionSlot>
            <ExtensionSlot><Avatar><Text $size={12}>J</Text></Avatar></ExtensionSlot>
            <ExtensionSlot><MdMoreVert size={19} color="#fff" /></ExtensionSlot>
          </Extensions>
        </Toolbar>
        <Bookmarks>
          <AppsGrid /><Gap $w={9} /><Text $size={12} $ls={-0.1}>Apps</Text><Gap $w={17} /><Note /><Gap $w={9} />
          <Text $size={12} $ls={-0.3}>jasmine</Text><Gap $w={16} /><YouTube /><Push /><Divider $h={16} /><Gap $w={10} />
          <MdListAlt size={18} color="#b5b5b5" /><Gap $w={7} /><Text $size={12} $ls={-0.2}>Reading list</Text>
        </Bookmarks>
      </Chrome>
      <Viewport>
        <PageArea>
          <SiteHeader><Seal /><Gap $w={8} /><Text $font={source} $size={19} $color="#4a1012">PUPSIS</Text><Push />
            <Text $font={source} $size={15} $color="#45474b">Jerome</Text><Gap $w={5} />
            <svg width="15" height="15" viewBox="0 0 15 15"><rect x=".8" y=".8" width="13" height="13" fill="none" stroke="#333" strokeWidth="1.200" /><path d="M4 6h7l-3.500 4z" fill="#333" /></svg>
          </SiteHeader>
        </PageArea>
        <ScrollTrack $top={17} $len={67}><Arrow up color="#a3a3a3" /><Arrow /></ScrollTrack>
        <EvalModal>
          <EvalHead><Text $font={source} $size={21.6} $weight={300} $color="#212529">SUBJECT EVALUATION</Text><X size={12} color="#7f7f7f" w={2.2} /></EvalHead>
          <EvalBody>
            <GraduationButton><Text $font={source} $size={12.8} $weight={500} $color="#fff">Application for Graduation</Text></GraduationButton>
            <YearCard>
              <YearHead><Text $font={source} $size={14.4} $color="#fff">First Year</Text></YearHead>
              <Semester><Text $font={source} $size={18} $weight={300} $color="#212529">First Semester</Text></Semester>
              <SubjTable>
                <SubjRow $head $h={87}>{HEADS.map((h, i) => <SubjCell key={i} $head>{h}</SubjCell>)}</SubjRow>
                {ROWS.map(([h, cells], k) => (
                  <SubjRow key={k} $h={h}>{cells.map((c, i) => <SubjCell key={i} $c={i > 3}>{c}</SubjCell>)}</SubjRow>
                ))}
              </SubjTable>
            </YearCard>
          </EvalBody>
        </EvalModal>
      </Viewport>
      <Shelf>
        <WordIcon /><Gap $w={12} /><Text $size={13} $ls={-0.3}>USECASEDIAGRAM.docx</Text><Gap $w={19} /><Chevron color="#c4c4c4" /><Gap $w={18} /><Divider $h={44} />
        <Push /><ShowAll><Text $weight={600} $size={12} $ls={-0.2}>Show all</Text></ShowAll><Gap $w={13} /><X size={11} color="#ccc" w={1.5} />
      </Shelf>
      <Taskbar>
        <TaskItem $w={48}><WindowsIcon /></TaskItem>
        <SearchBox><SearchIcon /><Gap $w={11} /><Text $size={14.5} $ls={-0.35} $color="#333">Type here to search</Text></SearchBox>
        <TaskItem $w={48}><svg width="17" height="17"><circle cx="8.500" cy="8.500" r="7" fill="none" stroke="#fff" strokeWidth="2" /></svg></TaskItem>
        <TaskItem $w={48}><TaskView /></TaskItem>
        <TaskItem $w={52}><Folder /></TaskItem>
        <TaskItem $w={48}><Edge /></TaskItem>
        <TaskItem><Mail /></TaskItem>
        <TaskItem><Store /></TaskItem>
        <TaskItem $w={49} $active><ChromeLogo /></TaskItem>
        <TaskItem $open><Acrobat /></TaskItem>
        <TaskItem $open><Snip /></TaskItem>
        <Push />
        <TaskItem $w={25}><Chevron w={13} color="#fff" sw={1.1} /></TaskItem>
        <TaskItem $w={24}><Wifi /></TaskItem>
        <TaskItem $w={24}><Sound /></TaskItem>
        <TaskItem $w={36}><Text $size={12} $ls={-0.3}>ENG</Text></TaskItem>
        <Clock><Text $size={12} $ls={-0.4}>8:32 PM</Text><Text $size={12} $ls={-0.4}>4/18/2021</Text></Clock>
        <Gap $w={12} />
        <TaskItem $w={24}><Notice><Bubble /><Count><Text $size={12}>2</Text></Count></Notice></TaskItem>
        <ShowDesktop />
      </Taskbar>
      <PrintDialog />
    </Screen>
  );
}
